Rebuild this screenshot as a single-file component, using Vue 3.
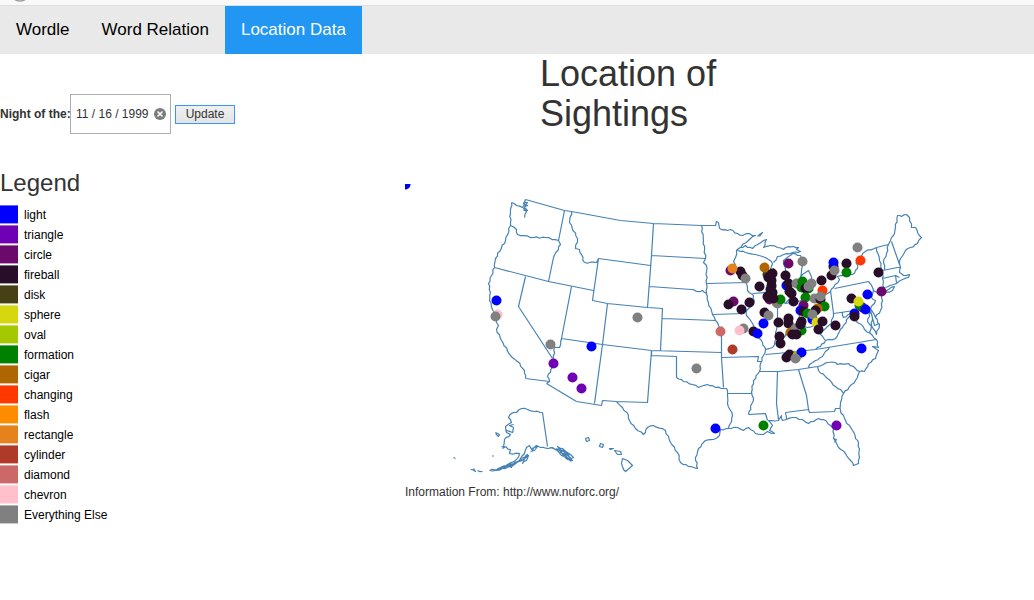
<script setup>
import { ref } from 'vue'

const night = ref('11 / 16 / 1999')

const colors = {
  light: '#0000ff',
  triangle: '#7000b4',
  circle: '#6c0a6c',
  fireball: '#280e28',
  disk: '#464014',
  sphere: '#d7d710',
  oval: '#a5c800',
  formation: '#008000',
  cigar: '#b06600',
  changing: '#ff3800',
  flash: '#ff8c00',
  rectangle: '#e6821e',
  cylinder: '#b03a2a',
  diamond: '#cd6868',
  chevron: '#ffc0cb',
  'Everything Else': '#808080'
}

const E = 'Everything Else'

const sightings = [
  ['light', 405, 184], ['light', 496, 300], ['chevron', 497, 314], [E, 495, 316],
  [E, 637, 317], [E, 550, 344], ['light', 591, 346], ['triangle', 553, 363],
  ['triangle', 572, 377], ['triangle', 581, 388], [E, 696, 368], ['light', 715, 428],
  ['formation', 763, 425], ['triangle', 836, 425], ['circle', 730, 270],
  ['fireball', 740, 271], ['fireball', 742, 275], ['rectangle', 732, 268], [E, 745, 278],
  ['disk', 767, 274], ['cigar', 764, 267], ['fireball', 772, 273], ['fireball', 768, 277],
  ['fireball', 771, 280], ['fireball', 771, 285], ['fireball', 759, 286], ['fireball', 770, 289],
  ['circle', 769, 299], ['fireball', 767, 296], ['fireball', 772, 292], ['rectangle', 776, 302],
  [E, 777, 303], ['formation', 780, 299], ['fireball', 773, 298], ['fireball', 768, 297],
  ['fireball', 749, 302], ['circle', 733, 301], ['fireball', 728, 304], ['fireball', 741, 309],
  ['fireball', 764, 312], [E, 768, 315], ['light', 763, 323], ['fireball', 778, 322],
  ['fireball', 788, 318], ['fireball', 788, 323], ['fireball', 753, 331], ['light', 757, 333],
  [E, 743, 328], ['chevron', 739, 330], ['diamond', 720, 331], ['cylinder', 732, 349],
  ['fireball', 779, 336], ['fireball', 780, 343], ['circle', 788, 263], [E, 802, 261],
  ['fireball', 785, 275], ['light', 786, 285], ['fireball', 788, 283], ['fireball', 789, 291],
  ['fireball', 791, 293], ['fireball', 793, 301], [E, 796, 283], ['formation', 801, 287],
  ['formation', 802, 281], [E, 811, 283], ['formation', 808, 288], ['fireball', 805, 288],
  [E, 808, 286], ['formation', 805, 297], ['circle', 803, 305], ['light', 800, 310],
  ['fireball', 803, 311], ['formation', 807, 313], ['fireball', 821, 280],
  ['changing', 822, 290], [E, 814, 298], ['fireball', 820, 299], [E, 820, 296],
  ['formation', 824, 306], ['cigar', 817, 308], ['fireball', 815, 310], ['light', 812, 319],
  [E, 812, 314], ['sphere', 816, 322], ['fireball', 822, 321], ['fireball', 818, 329],
  ['light', 800, 324], ['cigar', 790, 332], ['formation', 801, 330], [E, 795, 328],
  ['fireball', 801, 321], ['fireball', 800, 324], ['fireball', 792, 334], ['fireball', 796, 334],
  ['fireball', 786, 357], ['fireball', 789, 354], ['oval', 797, 355], ['light', 801, 352],
  [E, 795, 358], [E, 857, 247], ['changing', 860, 260], ['fireball', 833, 266],
  ['light', 833, 262], ['fireball', 831, 275], [E, 834, 270], ['fireball', 846, 263],
  ['formation', 846, 272], ['fireball', 878, 272], ['circle', 881, 291], ['light', 867, 294],
  ['fireball', 851, 298], ['circle', 862, 307], ['formation', 859, 305], ['sphere', 858, 301],
  ['light', 865, 309], ['light', 854, 313], ['fireball', 854, 316], ['fireball', 835, 325],
  ['light', 861, 348]
].map(([shape, x, y]) => ({ shape, x, y }))

// Surveyed state borders
const borders = [
  'M525 199L564 210L571 211L620 220L653 223L701 225L715 225L716 221L718 222L719 228',
  'M564 210L558 240M494 267L548 281L593 290M525 276L518 306L552 358M549 381L525 378',
  'M571 286L561 338L602 344L651 350L721 352M546 383L576 401L601 405L602 400L616 401L647 402L651 350',
  'M594 403L602 344L607 303M598 258L592 300L607 303L647 307L662 308L660 350',
  'M598 258L650 265M653 223L651 255L647 307M651 255L705 258M649 286L691 289',
  'M662 318L715 320M706 283L747 282M712 314L744 313M651 350L651 355L676 356L676 377',
  'M721 326L721 357L723 387M721 357L758 356L757 361L761 361M727 393L752 393M748 414L765 413L767 420',
  'M759 371L777 371L798 369L817 366M777 371L776 403L778 419M798 369L806 395L808 409',
  'M785 412L808 409L809 412L834 411L835 408L840 408M765 354L787 352L815 349L876 339',
  'M752 293L776 291M777 300L777 323M800 300L798 325M785 303L807 299M548 281L553 257',
  'M830 290L833 313L868 308M834 288L868 281M876 247L888 244M891 241L899 264',
  'M882 270L897 267L900 267M882 278L895 275L899 277M895 275L896 282M873 290L881 295M870 310L874 325L879 323',
  'M542 412L547 446'
]

// Coasts and rivers, drawn with an irregular edge
const shores = [
  [[511, 202], [516, 205], [522, 207], [525, 199]],
  [[525, 200], [523, 203], [527, 205], [523, 208], [526, 211], [524, 217]],
  [[523, 202], [527, 202], [524, 207], [527, 210], [523, 210]],
  [[511, 202], [510, 213], [510, 225], [505, 240], [495, 258], [494, 267], [488, 283], [490, 292], [489, 300], [492, 309], [496, 322], [498, 325], [496, 329], [501, 340], [510, 355], [517, 361], [524, 370], [525, 378]],
  [[510, 225], [516, 229], [517, 234], [533, 237], [545, 237], [558, 240], [560, 244], [553, 257]],
  [[571, 211], [569, 222], [577, 238], [575, 248], [579, 249], [584, 262], [596, 262], [598, 258]],
  [[561, 338], [559, 347], [554, 347], [553, 358], [550, 372], [547, 376], [549, 381], [546, 383]],
  [[701, 225], [703, 240], [705, 258], [703, 262], [706, 265], [706, 283], [706, 293]],
  [[691, 289], [696, 291], [702, 290], [706, 293], [708, 302], [712, 314], [715, 320], [718, 325], [721, 330]],
  [[719, 228], [727, 230], [730, 229], [737, 233], [742, 235], [746, 233], [755, 235], [750, 238], [738, 248], [736, 250], [735, 257], [733, 261], [735, 267], [740, 273], [746, 283], [747, 290], [753, 295], [753, 303], [746, 310], [746, 315], [752, 323], [755, 332], [762, 342], [765, 349], [763, 355], [760, 363], [759, 371], [753, 380], [751, 392], [753, 398], [748, 414]],
  [[757, 236], [762, 232], [759, 236]],
  [[737, 249], [745, 245], [747, 247], [752, 248], [757, 244], [763, 240], [766, 239], [763, 247], [770, 245], [777, 247], [783, 249], [785, 247], [793, 246], [798, 247], [796, 249], [800, 251], [792, 252], [783, 254], [777, 256], [773, 262]],
  [[737, 250], [745, 252], [755, 254], [762, 256], [768, 259], [772, 263], [769, 274], [773, 268], [775, 273], [774, 284], [776, 292], [777, 300], [785, 303], [792, 296], [791, 286], [785, 270], [783, 260], [788, 256], [792, 253], [800, 255], [803, 262], [801, 270], [800, 277], [805, 272], [808, 270], [810, 274], [812, 283], [808, 292], [807, 298], [812, 300], [818, 300], [830, 291], [833, 287], [839, 279], [837, 276], [852, 274], [857, 268], [856, 260], [865, 251], [876, 247]],
  [[888, 244], [890, 240], [893, 235], [895, 227], [897, 215], [899, 215], [901, 216], [906, 214], [909, 217], [911, 227], [915, 227], [917, 232], [921, 237], [917, 243], [910, 247], [905, 250], [900, 258], [899, 263], [900, 267], [899, 272], [903, 275], [909, 274], [908, 277], [902, 279], [893, 284], [883, 287], [881, 295]],
  [[881, 294], [888, 289], [894, 286], [892, 290], [883, 293], [881, 294]],
  [[876, 247], [879, 260], [882, 270], [882, 278], [883, 287]],
  [[888, 244], [886, 253], [883, 262], [884, 269]],
  [[868, 281], [872, 287], [873, 290], [871, 297], [875, 300], [870, 308], [875, 317], [880, 310], [882, 300], [881, 295]],
  [[868, 308], [872, 317], [871, 325], [876, 334], [879, 324], [875, 317]],
  [[868, 309], [869, 316], [867, 321], [871, 326], [869, 332], [872, 335], [876, 339]],
  [[833, 313], [831, 323], [824, 329], [820, 334], [825, 340], [835, 338], [839, 331], [842, 327], [848, 317], [852, 314], [855, 320], [861, 324], [864, 329], [870, 333]],
  [[842, 312], [843, 317], [850, 313], [854, 314]],
  [[765, 349], [772, 347], [776, 338], [783, 337], [788, 331], [795, 330], [800, 323], [807, 327], [814, 325], [820, 334]],
  [[777, 323], [775, 332], [776, 338]],
  [[825, 340], [820, 346], [815, 349]],
  [[876, 339], [878, 347], [872, 346], [878, 350], [875, 358], [868, 363], [864, 371], [859, 371], [855, 380], [843, 393], [840, 402], [840, 410], [845, 420], [852, 430], [858, 443], [859, 457], [858, 463], [853, 465], [850, 460], [845, 453], [838, 447], [833, 438], [833, 428], [830, 425], [823, 419], [818, 418], [808, 423], [802, 419], [792, 417], [786, 419], [785, 412]],
  [[833, 438], [836, 439], [834, 442]],
  [[786, 419], [782, 420], [781, 415], [778, 420], [768, 420], [772, 425], [769, 430], [774, 433], [767, 431], [763, 434], [755, 433], [748, 427], [743, 430], [737, 427], [728, 428], [720, 429], [719, 435], [713, 439], [705, 440], [698, 448], [695, 457], [697, 468], [688, 466], [680, 462], [677, 452], [670, 442], [665, 430], [653, 425], [647, 427], [643, 434], [635, 428], [629, 420], [628, 415], [622, 407], [616, 401]],
  [[817, 366], [828, 362], [835, 362], [837, 364], [848, 363], [859, 371]],
  [[817, 366], [818, 370], [827, 378], [835, 386], [840, 389], [843, 393]],
  [[808, 367], [809, 364], [815, 360], [822, 356], [825, 351], [829, 347]],
  [[676, 377], [683, 381], [692, 384], [698, 387], [707, 384], [715, 387], [726, 388], [727, 393], [727, 403], [732, 415], [730, 423], [728, 428]],
  [[542, 412], [534, 411], [527, 409], [521, 408], [516, 412], [511, 413], [508, 417], [511, 422], [505, 426], [506, 432], [510, 434], [504, 439], [503, 446], [510, 449], [509, 453], [519, 453], [516, 459], [507, 464], [498, 469]],
  [[513, 424], [509, 425], [513, 427], [512, 432], [506, 430]],
  [[498, 469], [506, 466], [518, 461], [524, 453], [526, 447], [529, 445], [532, 450], [536, 445], [540, 447], [548, 448], [552, 447], [557, 449], [567, 455], [572, 460], [567, 459], [559, 450]],
  [[489, 470], [495, 470], [502, 468], [512, 464], [520, 460], [527, 454], [524, 458], [515, 463], [507, 467], [489, 470]],
  [[508, 465], [514, 463], [511, 467], [507, 465]],
  [[493, 470], [500, 467], [506, 465], [511, 463]],
  [[524, 458], [528, 455], [526, 460], [522, 463], [524, 458]],
  [[531, 448], [537, 446], [534, 450], [530, 451]],
  [[549, 447], [555, 449], [560, 454], [568, 458], [573, 457], [570, 454], [562, 448], [557, 446], [560, 452], [566, 456], [571, 461]],
  [[556, 448], [563, 451], [567, 454], [561, 455], [571, 459], [566, 452], [558, 447]],
  [[470, 469], [475, 471], [473, 468]],
  [[477, 470], [482, 471]],
  [[495, 432], [499, 434], [498, 436], [495, 432]],
  [[501, 446], [504, 447], [502, 448]],
  [[453, 457], [455, 458]],
  [[492, 455], [493, 456]]
]

const islands = [
  'M585 438L588 437L589 440L586 441Z', 'M600 443L603 444L602 447L599 446Z',
  'M609 448L613 448L610 449Z', 'M614 450L620 451L621 454L617 454L614 450Z',
  'M622 458L627 460L632 465L625 471L623 469L621 463Z'
]

function roughen(points) {
  let path = `M${points[0][0]} ${points[0][1]}`
  for (let i = 1; i < points.length; i++) {
    const [x0, y0] = points[i - 1]
    const [x1, y1] = points[i]
    const length = Math.hypot(x1 - x0, y1 - y0)
    const steps = Math.max(1, Math.round(length / 3))
    for (let s = 1; s <= steps; s++) {
      const t = s / steps
      const shift = s === steps ? 0 : Math.sin((x0 + y0 + i * 7 + s * 2) * 2) * 0.7
      const x = x0 + (x1 - x0) * t - ((y1 - y0) / length) * shift
      const y = y0 + (y1 - y0) * t + ((x1 - x0) / length) * shift
      path += `L${x.toFixed(1)} ${y.toFixed(1)}`
    }
  }
  return path
}

const outline = [...borders, ...shores.map(roughen), ...islands].join('')
</script>

<template>
  <div class="page">
    <div class="strip">
      <svg class="strip-ring" width="24" height="3" viewBox="0 0 24 3" aria-hidden="true">
        <circle cx="12" cy="-9" r="10" fill="none" stroke="#999" stroke-width="1.5" />
      </svg>
    </div>
    <nav class="nav">
      <a href="#wordle">Wordle</a>
      <a href="#relation">Word Relation</a>
      <a href="#location" class="active">Location Data</a>
    </nav>
    <main class="content">
      <aside class="side">
        <form class="filter" @submit.prevent>
          <label for="night">Night of the:</label>
          <div class="date">
            <input id="night" v-model="night" type="text" />
            <button type="button" class="clear" aria-label="Clear" @click="night = ''">
              <svg width="12" height="12" viewBox="0 0 12 12">
                <circle cx="6" cy="6" r="6" fill="#7b7b7b" />
                <path d="M3.5 3.5L8.500 8.500M8.500 3.500L3.500 8.500" stroke="#fff" stroke-width="1.5" />
              </svg>
            </button>
          </div>
          <button type="submit" class="update">Update</button>
        </form>
        <h3>Legend</h3>
        <ul class="legend">
          <li v-for="(color, name) in colors" :key="name">
            <span class="swatch" :style="{ backgroundColor: color }"></span>{{ name }}
          </li>
        </ul>
      </aside>
      <section class="map">
        <h1>Location of Sightings</h1>
        <svg class="chart" viewBox="404.5 183.5 560 298" role="img" aria-label="Map of sightings">
          <path :d="outline" fill="none" stroke="#4682b4" stroke-width="1.2" stroke-linejoin="round" />
          <circle
            v-for="(s, i) in sightings"
            :key="i"
            :cx="s.x"
            :cy="s.y"
            r="5"
            :fill="colors[s.shape]"
          />
        </svg>
        <p>Information From: http://www.nuforc.org/</p>
      </section>
    </main>
  </div>
</template>

<style>
body {
  margin: 0;
  background: #fff;
}
</style>

<style scoped>
.page {
  font-family: "Liberation Sans", Arial, sans-serif;
  font-size: 12px;
  line-height: 16px;
  color: #333;
}
.strip {
  height: 5px;
  background: #f9f9f9;
  border-bottom: 1px solid #e0e0e0;
}
.strip-ring {
  display: block;
  margin-left: 8px;
}
.nav {
  display: flex;
  background: #e9e9e9;
}
.nav a {
  padding: 14px 16px;
  font-size: 17px;
  line-height: 20px;
  color: #000;
  text-decoration: none;
}
.nav a.active {
  background: #2196f3;
  color: #fff;
}
.content {
  display: grid;
  grid-template-columns: 405px 1fr;
}
.filter {
  display: flex;
  align-items: center;
  margin-top: 40px;
}
.filter label {
  width: 70px;
  font-weight: bold;
  white-space: nowrap;
}
.date {
  position: relative;
  width: 101px;
  margin-right: 4px;
}
.date input {
  box-sizing: border-box;
  display: block;
  width: 100%;
  height: 40px;
  padding: 0 20px 0 5px;
  border: 1px solid #abadb3;
  background: #fff;
  font: inherit;
  color: #333;
}
.clear {
  position: absolute;
  top: 14px;
  right: 5px;
  width: 12px;
  height: 12px;
  padding: 0;
  border: 0;
  background: none;
}
.clear svg {
  display: block;
}
.update {
  width: 60px;
  height: 19px;
  padding: 0;
  border: 1px solid #3399ff;
  background: linear-gradient(#f0f0f0, #e4e4e4);
  font: inherit;
  color: #333;
}
h3 {
  margin: 35px 0 9px;
  font-size: 24px;
  line-height: 27px;
  font-weight: normal;
}
.legend {
  margin: 0;
  padding: 0;
  list-style: none;
  color: #000;
}
.legend li {
  display: flex;
  align-items: center;
  gap: 6px;
  height: 20px;
}
.swatch {
  width: 18px;
  height: 19px;
  margin-bottom: 1px;
  box-shadow: inset 0 1px rgba(255, 255, 255, 0.4), inset 0 -1px rgba(255, 255, 255, 0.6);
}
h1 {
  max-width: 240px;
  margin: 0 0 50px 135px;
  font-size: 36px;
  line-height: 40px;
  font-weight: normal;
}
.chart {
  display: block;
  width: 100%;
  max-width: 560px;
}
.map p {
  margin: 2px 0 0;
}
</style>
